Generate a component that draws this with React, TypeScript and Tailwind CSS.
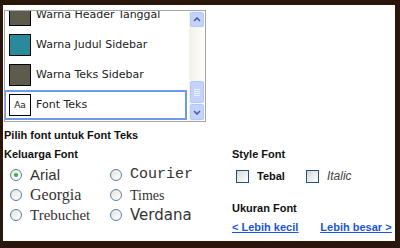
import React from 'react';

const items = [
  { label: 'Warna Header Tanggal', color: '#5d5b4c' },
  { label: 'Warna Judul Sidebar', color: '#2a8a9c' },
  { label: 'Warna Teks Sidebar', color: '#5d5b4c' },
];

const fonts = [
  { label: 'Arial', cls: "font-['Liberation_Sans',Arial,sans-serif] text-[15px]", checked: true },
  { label: 'Courier', cls: "font-['Liberation_Mono','Courier_New',monospace] text-[15px]" },
  { label: 'Georgia', cls: "font-['Liberation_Serif',Georgia,serif] text-[16px]" },
  { label: 'Times', cls: "font-['Liberation_Serif','Times_New_Roman',serif] text-[14px]" },
  { label: 'Trebuchet', cls: "font-['Liberation_Serif',serif] text-[15px]" },
  { label: 'Verdana', cls: "font-['DejaVu_Sans',Verdana,sans-serif] text-[15px]" },
];

const Radio = ({ checked }: { checked?: boolean }) => (
  <span className="w-[12px] h-[12px] rounded-full border border-[#5b7fa8] bg-gradient-to-br from-[#e4e4de] to-white flex items-center justify-center shrink-0">
    {checked && <span className="w-[4px] h-[4px] rounded-full bg-[#2fb53a]" />}
  </span>
);

const Checkbox = ({ className = '' }: { className?: string }) => (
  <span className={`block w-[13px] h-[13px] border border-[#1c5180] bg-gradient-to-br from-[#d8d8d2] to-white shrink-0 ${className}`} />
);

export default function App() {
  return (
    <div className="w-[400px] h-[248px] bg-[#2b160c] pt-[5px] pl-[3px] pr-[5px] pb-[7px]">
      <div className="h-full bg-white flex flex-col font-['Liberation_Sans',Arial,sans-serif] text-[#111]">
        {/* Listbox */}
        <div className="ml-[1px] mt-[5px] w-[202px] h-[112px] border border-[#a5a5a5] flex overflow-hidden">
          <div className="flex-1 overflow-hidden">
            <div className="-mt-[11px] font-['DejaVu_Sans',Verdana,sans-serif] text-[11px] text-[#222]">
              {items.map((it) => (
                <div key={it.label} className="h-[30px] flex items-center pl-[4px] gap-[5px]">
                  <span className="w-[22px] h-[22px] border border-black" style={{ backgroundColor: it.color }} />
                  <span>{it.label}</span>
                </div>
              ))}
              <div className="h-[30px] -ml-[1px] w-[183px] border-[2px] border-[#6e9be9] flex items-center pl-[3px] gap-[5px]">
                <span className="w-[22px] h-[22px] border border-black bg-white flex items-center justify-center text-[9px] leading-none">Aa</span>
                <span>Font Teks</span>
              </div>
            </div>
          </div>
          {/* Scrollbar */}
          <div className="w-[16px] bg-gradient-to-r from-[#f3f1e8] to-[#fdfdfa] flex flex-col">
            <div className="h-[15px] mt-[1px] mx-[1px] rounded-[2px] bg-[#c3d3fd] border border-[#b4c8f6] flex items-center justify-center">
              <svg width="8" height="5" viewBox="0 0 8 5"><path d="M1 4 L4 1 L7 4" stroke="#4d6185" strokeWidth="1.6" fill="none" /></svg>
            </div>
            <div className="flex-1" />
            <div className="h-[22px] mx-[1px] rounded-[2px] bg-[#c3d3fd] border border-[#b4c8f6] flex flex-col items-center justify-center gap-[1px]">
              {[0, 1, 2, 3].map((i) => (
                <span key={i} className="w-[6px] h-[1px] bg-[#eef4fe]" />
              ))}
            </div>
            <div className="h-[16px] mx-[1px] mb-[1px] mt-[1px] rounded-[2px] bg-[#c3d3fd] border border-[#b4c8f6] flex items-center justify-center">
              <svg width="8" height="5" viewBox="0 0 8 5"><path d="M1 1 L4 4 L7 1" stroke="#4d6185" strokeWidth="1.6" fill="none" /></svg>
            </div>
          </div>
        </div>

        {/* Font options */}
        <div className="ml-[1px] mt-[7px] text-[11px] font-bold leading-[13px]">Pilih font untuk Font Teks</div>
        <div className="flex ml-[1px] mt-[6px]">
          <div className="w-[228px]">
            <div className="text-[11px] font-bold leading-[13px]">Keluarga Font</div>
            <div className="grid grid-cols-[100px_100px] ml-[6px] mt-[4px] text-[#333]">
              {fonts.map((f) => (
                <label key={f.label} className="h-[20px] flex items-center gap-[8px]">
                  <Radio checked={f.checked} />
                  <span className={f.cls}>{f.label}</span>
                </label>
              ))}
            </div>
          </div>
          <div className="flex-1">
            <div className="text-[11px] font-bold leading-[13px]">Style Font</div>
            <div className="flex items-center mt-[8px] ml-[4px] h-[14px]">
              <Checkbox />
              <span className="ml-[8px] text-[11px] font-bold">Tebal</span>
              <Checkbox className="ml-[21px]" />
              <span className="ml-[8px] text-[12px] italic text-[#444]">Italic</span>
            </div>
            <div className="mt-[19px] text-[11px] font-bold leading-[13px]">Ukuran Font</div>
            <div className="flex mt-[6px] text-[11px] font-bold leading-[13px] text-[#1b56d8] underline">
              <a href="#">&lt; Lebih kecil</a>
              <a href="#" className="ml-[22px]">Lebih besar &gt;</a>
            </div>
          </div>
        </div>
      </div>
    </div>
  );
}
